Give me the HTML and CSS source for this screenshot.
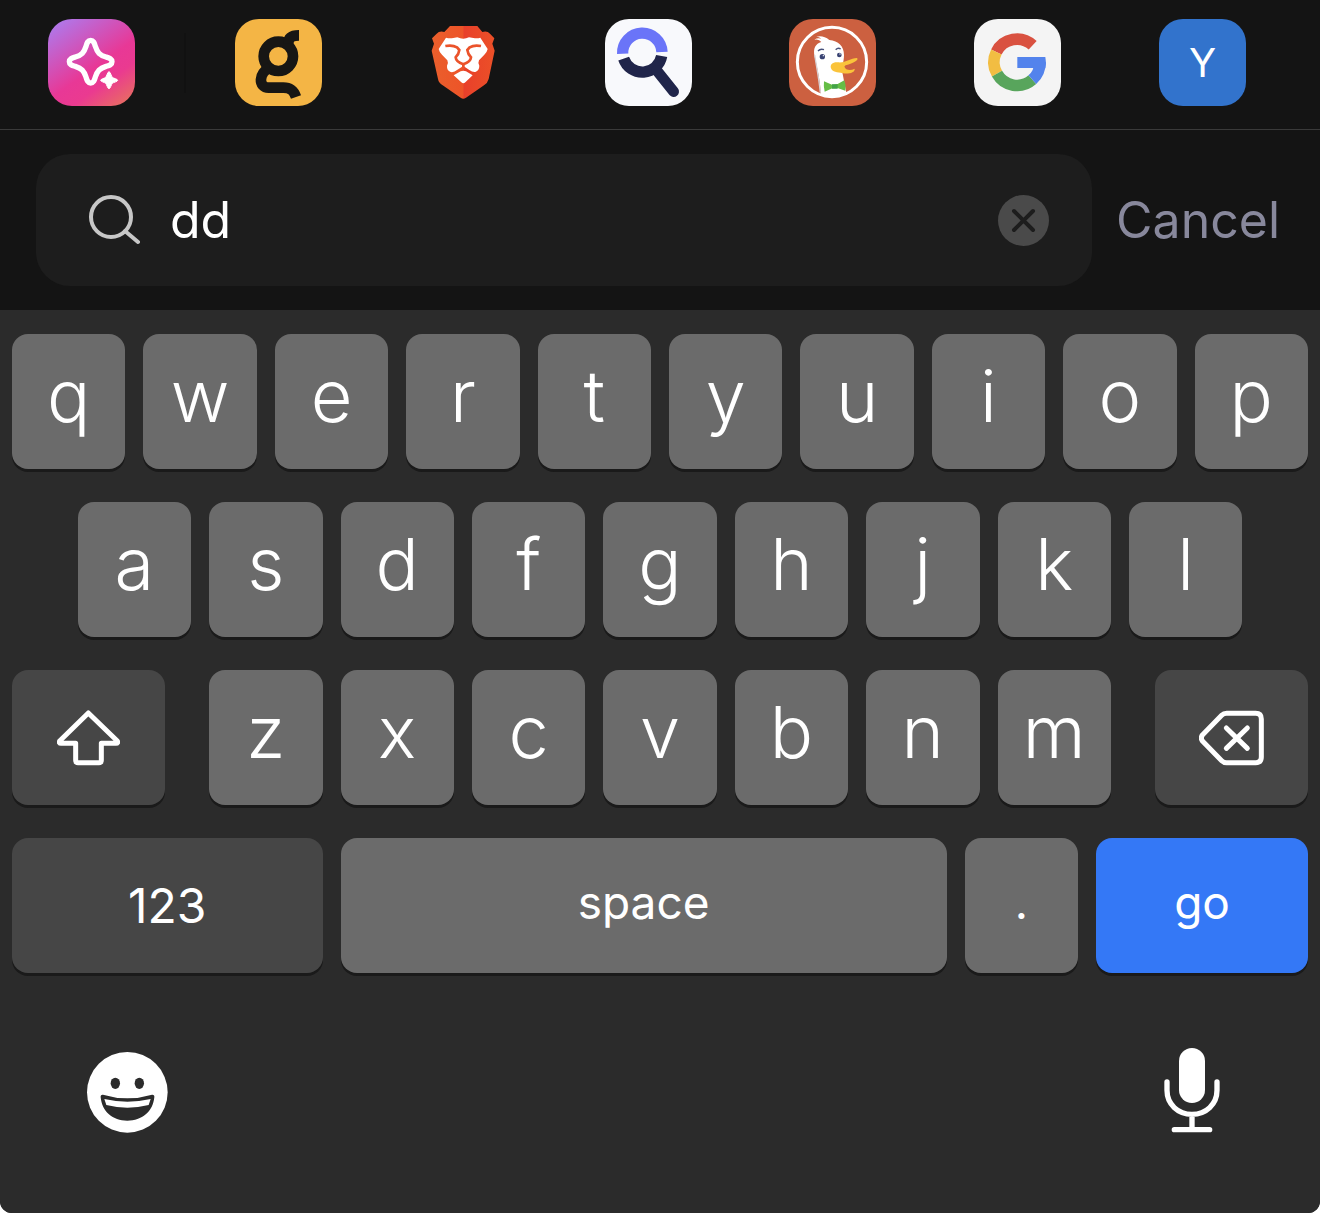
FILE: index.html
```html
<!DOCTYPE html>
<html lang="en">
<head>
    <meta charset="UTF-8">
    <meta name="viewport" content="width=device-width, initial-scale=1.0">
    <title>Search</title>
    <link rel="stylesheet" href="styles.css">
</head>
<body>
<div class="screen">
    <!-- Search engines -->
    <nav class="engines" aria-label="Search engines">
        <a class="engine engine-ai" href="#" aria-label="AI search">
            <svg viewBox="54 57 261 261">
                <path d="M182 121 C191 121 193 129 196 139 C202 158 209 165 228 171 C238 174 246 176 246 185 C246 194 238 196 228 199 C209 205 202 212 196 231 C193 241 191 249 182 249 C173 249 171 241 168 231 C162 212 155 205 136 199 C126 196 118 194 118 185 C118 176 126 174 136 171 C155 165 162 158 168 139 C171 129 173 121 182 121 Z" fill="none" stroke="#fff" stroke-width="16"/>
                <path d="M237 215 C241 215 244 229 247 232 C250 235 263 237 263 241 C263 245 250 247 247 250 C244 253 241 266 237 266 C233 266 230 253 227 250 C224 247 212 245 212 241 C212 237 224 235 227 232 C230 229 233 215 237 215 Z" fill="#fff" stroke="#fff" stroke-width="3"/>
            </svg>
        </a>
        <span class="divider"></span>
        <div class="engine-list">
            <a class="engine engine-g" href="#" aria-label="Ghostery">
                <svg viewBox="45 42 261 261" fill="none" stroke="#171614" stroke-width="32">
                    <circle cx="175" cy="154" r="44"/>
                    <path d="M205 116 C205 96 217 91 237 91"/>
                    <path d="M150 188 C115 203 114 248 146 248 H190 C214 248 222 259 228 276"/>
                </svg>
            </a>
            <a class="engine" href="#" aria-label="Brave">
                <svg viewBox="30 42 261 261">
                    <defs>
                        <linearGradient id="brave" x1="0" x2="1" y1="0" y2="0">
                            <stop offset="0" stop-color="#ea5f2c"/>
                            <stop offset="0.5" stop-color="#ed5428"/>
                            <stop offset="0.51" stop-color="#e8402a"/>
                            <stop offset="1" stop-color="#ec5028"/>
                        </linearGradient>
                    </defs>
                    <path d="M120 63 H202 L217 81 Q232 77 240 86 L253 100 L247 116 L254 137 L236 222 Q233 234 222 241 L168 278 Q160 284 152 278 L98 241 Q86 234 84 222 L65 137 L72 116 L66 100 L80 86 Q88 77 103 81 Z" fill="url(#brave)"/>
                    <path d="M108 98 Q118 101 130 99 L142 97 Q160 105 177 97 L190 99 Q202 101 211 98 L233 132 Q231 142 223 149 L207 166 Q203 174 208 182 Q208 196 196 201 Q187 202 178 195 L160 183 L141 195 Q132 203 122 201 Q110 196 111 182 Q116 174 112 166 L96 149 Q88 142 86 132 Z" fill="#fff"/>
                    <path d="M106 123 Q128 119 141 127 L148 135 Q146 149 137 157 Q138 170 160 178 Q182 170 183 157 Q174 149 172 135 L179 127 Q192 119 213 123" fill="none" stroke="#eb532b" stroke-width="8"/>
                    <path d="M160 176 V192" stroke="#eb532b" stroke-width="8"/>
                    <path d="M131 211 L152 199 Q160 195 168 199 L188 211 L166 232 Q160 238 154 232 Z" fill="#fff"/>
                </svg>
            </a>
            <a class="engine engine-find" href="#" aria-label="Startpage">
                <svg viewBox="45 42 261 261" fill="none" stroke-width="34">
                    <path d="M98 146 A59 59 0 0 1 216 141" stroke="#6a74f8"/>
                    <path d="M101 161 A59 59 0 0 0 215 153" stroke="#20254a"/>
                    <path d="M200 196 L251 260" stroke="#20254a" stroke-width="32" stroke-linecap="round"/>
                </svg>
            </a>
            <a class="engine engine-duck" href="#" aria-label="DuckDuckGo">
                <svg viewBox="42 42 261 261">
                    <path d="M137 266 C136 228 128 194 119 155 C113 130 122 116 139 111 Q132 101 118 104 Q128 97 139 101 Q132 95 124 95 Q145 90 163 105 C190 108 207 123 207 150 C207 172 200 180 202 202 L214 264 Q176 284 137 266 Z" fill="#fff"/>
                    <path d="M119 150 C125 188 132 220 136 263" fill="none" stroke="#d7d2d5" stroke-width="4"/>
                    <circle cx="171" cy="171" r="104" fill="none" stroke="#fff" stroke-width="9"/>
                    <path d="M168 190 C164 178 174 170 190 172 C212 174 226 159 246 159 C253 165 236 174 212 181 Q204 184 214 193 Q226 198 239 191 C241 202 222 208 204 205 C186 201 172 202 168 190 Z" fill="#fac33b"/>
                    <circle cx="142" cy="155" r="8" fill="#394373"/>
                    <circle cx="193" cy="150" r="7" fill="#394373"/>
                    <circle cx="145" cy="152" r="2" fill="#fff"/>
                    <circle cx="195" cy="147" r="2" fill="#fff"/>
                    <path d="M129 138 Q136 130 147 134 M182 134 Q189 127 197 132" fill="none" stroke="#47517b" stroke-width="4"/>
                    <path d="M147 229 L171 239 L188 237 L208 226 Q214 240 211 257 L187 249 L172 250 L149 260 Q145 244 147 229 Z" fill="#65bd46"/>
                    <path d="M171 238 H188 V251 H171 Z" fill="#43a347"/>
                </svg>
            </a>
            <a class="engine engine-google" href="#" aria-label="Google">
                <svg viewBox="42 42 261 261" fill="none" stroke-width="35">
                    <path d="M109 141 A69 69 0 0 1 218 121" stroke="#d95140"/>
                    <path d="M111 206 A69 69 0 0 1 109 141" stroke="#f2bd42"/>
                    <path d="M217 224 A69 69 0 0 1 111 206" stroke="#58a55c"/>
                    <path d="M217 224 A69 69 0 0 0 240 172" stroke="#5383ec"/>
                    <path d="M172 156 H256 L258 174 L256 189 H172 Z" fill="#5383ec" stroke="none"/>
                </svg>
            </a>
            <a class="engine engine-y" href="#">Y</a>
        </div>
    </nav>

    <!-- Search field -->
    <form class="search" onsubmit="return false">
        <div class="search-field">
            <label class="search-icon" for="query" aria-label="Search">
                <svg viewBox="0 0 52 50" fill="none" stroke="#c7c7c7" stroke-width="4" stroke-linecap="round">
                    <circle cx="23" cy="22" r="20"/>
                    <path d="M37 36 L50 47"/>
                </svg>
            </label>
            <input class="search-input" id="query" type="text" value="dd" autocomplete="off">
            <button class="clear" type="reset" aria-label="Clear">
                <svg viewBox="0 0 51 51" fill="none" stroke="#1d1d1d" stroke-width="4" stroke-linecap="round">
                    <path d="M16 16 L35 35 M35 16 L16 35"/>
                </svg>
            </button>
        </div>
        <button class="cancel" type="button">Cancel</button>
    </form>

    <!-- Keyboard -->
    <div class="keyboard">
        <div class="keys">
            <button class="key">q</button>
            <button class="key">w</button>
            <button class="key">e</button>
            <button class="key">r</button>
            <button class="key">t</button>
            <button class="key">y</button>
            <button class="key">u</button>
            <button class="key">i</button>
            <button class="key">o</button>
            <button class="key">p</button>

            <button class="key key-a">a</button>
            <button class="key">s</button>
            <button class="key">d</button>
            <button class="key">f</button>
            <button class="key">g</button>
            <button class="key">h</button>
            <button class="key">j</button>
            <button class="key">k</button>
            <button class="key">l</button>

            <button class="key key-dark key-shift" aria-label="Shift">
                <svg width="63" height="56" viewBox="174 153 189 168" fill="none" stroke="#fff" stroke-width="15" stroke-linejoin="round">
                    <path d="M268 162 L182 246 Q179 253 186 253 H230 V304 Q230 311 237 311 H300 Q307 311 307 304 V253 H351 Q358 253 355 246 Z"/>
                </svg>
            </button>
            <button class="key key-z">z</button>
            <button class="key">x</button>
            <button class="key">c</button>
            <button class="key">v</button>
            <button class="key">b</button>
            <button class="key">n</button>
            <button class="key">m</button>
            <button class="key key-dark key-delete" aria-label="Delete">
                <svg width="65" height="56" viewBox="360 153 195 168" fill="none" stroke="#fff" stroke-width="15" stroke-linecap="round" stroke-linejoin="round">
                    <path d="M443 163 H530 Q547 163 547 180 V294 Q547 311 530 311 H443 Q434 311 428 305 L371 247 Q363 237 371 227 L428 169 Q434 163 443 163 Z"/>
                    <path d="M442 207 L505 268 M505 207 L442 268"/>
                </svg>
            </button>

            <button class="key key-dark key-123">123</button>
            <button class="key key-word key-space">space</button>
            <button class="key key-word">.</button>
            <button class="key key-word key-go">go</button>
        </div>

        <div class="keyboard-footer">
            <button class="tool" aria-label="Emoji">
                <svg width="81" height="81" viewBox="261 67 243 243">
                    <circle cx="382" cy="188" r="121" fill="#fff"/>
                    <ellipse cx="346" cy="161" rx="14" ry="17" fill="#2b2b2b"/>
                    <ellipse cx="418" cy="161" rx="14" ry="17" fill="#2b2b2b"/>
                    <path d="M309 195 Q382 217 456 195 Q464 194 463 203 C459 246 426 273 382 273 C338 273 306 246 302 203 Q301 194 309 195 Z" fill="#2b2b2b"/>
                    <path d="M313 208 Q382 224 452 208 L446 226 Q382 242 319 226 Z" fill="#fff"/>
                </svg>
            </button>
            <button class="tool" aria-label="Dictate">
                <svg width="56" height="86" viewBox="132 50 168 258" fill="none" stroke="#fff" stroke-width="16" stroke-linecap="round">
                    <rect x="177" y="53" width="78" height="165" rx="39" fill="#fff" stroke="none"/>
                    <path d="M141 155 V180 C141 222 174 252 216 252 C258 252 291 222 291 180 V155 M216 252 V297 M163 298 H269"/>
                </svg>
            </button>
        </div>
    </div>
</div>
</body>
</html>
```

FILE: styles.css
```css
* {
    box-sizing: border-box;
}

body {
    margin: 0;
    background-color: #fff;
    color: #fff;
    font-family: Inter, "Liberation Sans", sans-serif;
}

button, input {
    margin: 0;
    padding: 0;
    border: none;
    background: none;
    color: inherit;
    font-family: inherit;
}

button {
    cursor: pointer;
}

svg {
    display: block;
}

.screen {
    display: flex;
    flex-direction: column;
    min-height: 100vh;
    overflow: hidden;
    border-radius: 0 0 12px 12px;
    background-color: #141414;
}

/* Search engines */
.engines {
    display: flex;
    align-items: center;
    padding: 19px 74px 23px 48px;
    border-bottom: 1px solid #3a3a3a;
}

.engine-list {
    display: flex;
    flex: 1;
    justify-content: space-between;
}

.divider {
    width: 2px;
    height: 60px;
    margin: 0 49px;
    background-color: #111;
}

.engine {
    display: flex;
    align-items: center;
    justify-content: center;
    width: 87px;
    height: 87px;
    border-radius: 24px;
    overflow: hidden;
    color: #fff;
    font-size: 40px;
    font-weight: 400;
    text-decoration: none;
}

.engine svg {
    width: 100%;
    height: 100%;
}

.engine-ai {
    background: linear-gradient(145deg, #a880f5 0%, #e83896 55%, #ea3a90 70%, #e87858 100%);
}

.engine-g {
    background-color: #f4b545;
}

.engine-find {
    background-color: #f8f9fc;
}

.engine-duck {
    background-color: #cc6040;
}

.engine-google {
    background-color: #f4f4f4;
}

.engine-y {
    background-color: #3273cc;
}

/* Search field */
.search {
    display: flex;
    align-items: center;
    gap: 24px;
    padding: 24px 40px 24px 36px;
}

.search-field {
    display: flex;
    flex: 1;
    align-items: center;
    min-width: 0;
    height: 132px;
    padding: 0 43px 0 52px;
    border-radius: 34px;
    background-color: #1d1d1d;
}

.search-icon {
    width: 52px;
    margin-right: 30px;
}

.search-input {
    flex: 1;
    min-width: 0;
    outline: none;
    font-size: 50px;
}

.clear {
    width: 51px;
    height: 51px;
    border-radius: 50%;
    background-color: #4a4a4a;
}

.cancel {
    color: #88889c;
    font-size: 50px;
}

/* Keyboard */
.keyboard {
    flex: 1;
    padding: 24px 12px;
    background-color: #2b2b2b;
}

/* a letter key is 4 columns wide, so the rows can start on half a key */
.keys {
    display: grid;
    grid-template-columns: repeat(40, minmax(0, 1fr));
    gap: 33px 18px;
}

.key {
    display: flex;
    grid-column-end: span 4;
    align-items: center;
    justify-content: center;
    height: 135px;
    padding-bottom: 12px;
    border-radius: 16px;
    background-color: #6b6b6b;
    box-shadow: 0 3px 0 #1a1a1a;
    font-size: 72px;
    font-weight: 350;
}

.key-a {
    grid-column-start: 3;
}

.key-z {
    grid-column-start: 7;
}

.key-dark {
    padding-bottom: 0;
    background-color: #464646;
}

.key-shift {
    grid-column: 1 / span 6;
    margin-right: 26px;
}

.key-delete {
    grid-column: 35 / span 6;
    margin-left: 26px;
}

.key-123 {
    grid-column-end: span 10;
    font-size: 48px;
    font-weight: 400;
}

.key-word {
    padding-bottom: 8px;
    font-size: 46px;
    font-weight: 400;
}

.key-space {
    grid-column-end: span 19;
}

.key-go {
    grid-column-end: span 7;
    background-color: #3478f6;
}

.keyboard-footer {
    display: flex;
    align-items: flex-end;
    justify-content: space-between;
    padding: 74px 88px 0 75px;
}
```
